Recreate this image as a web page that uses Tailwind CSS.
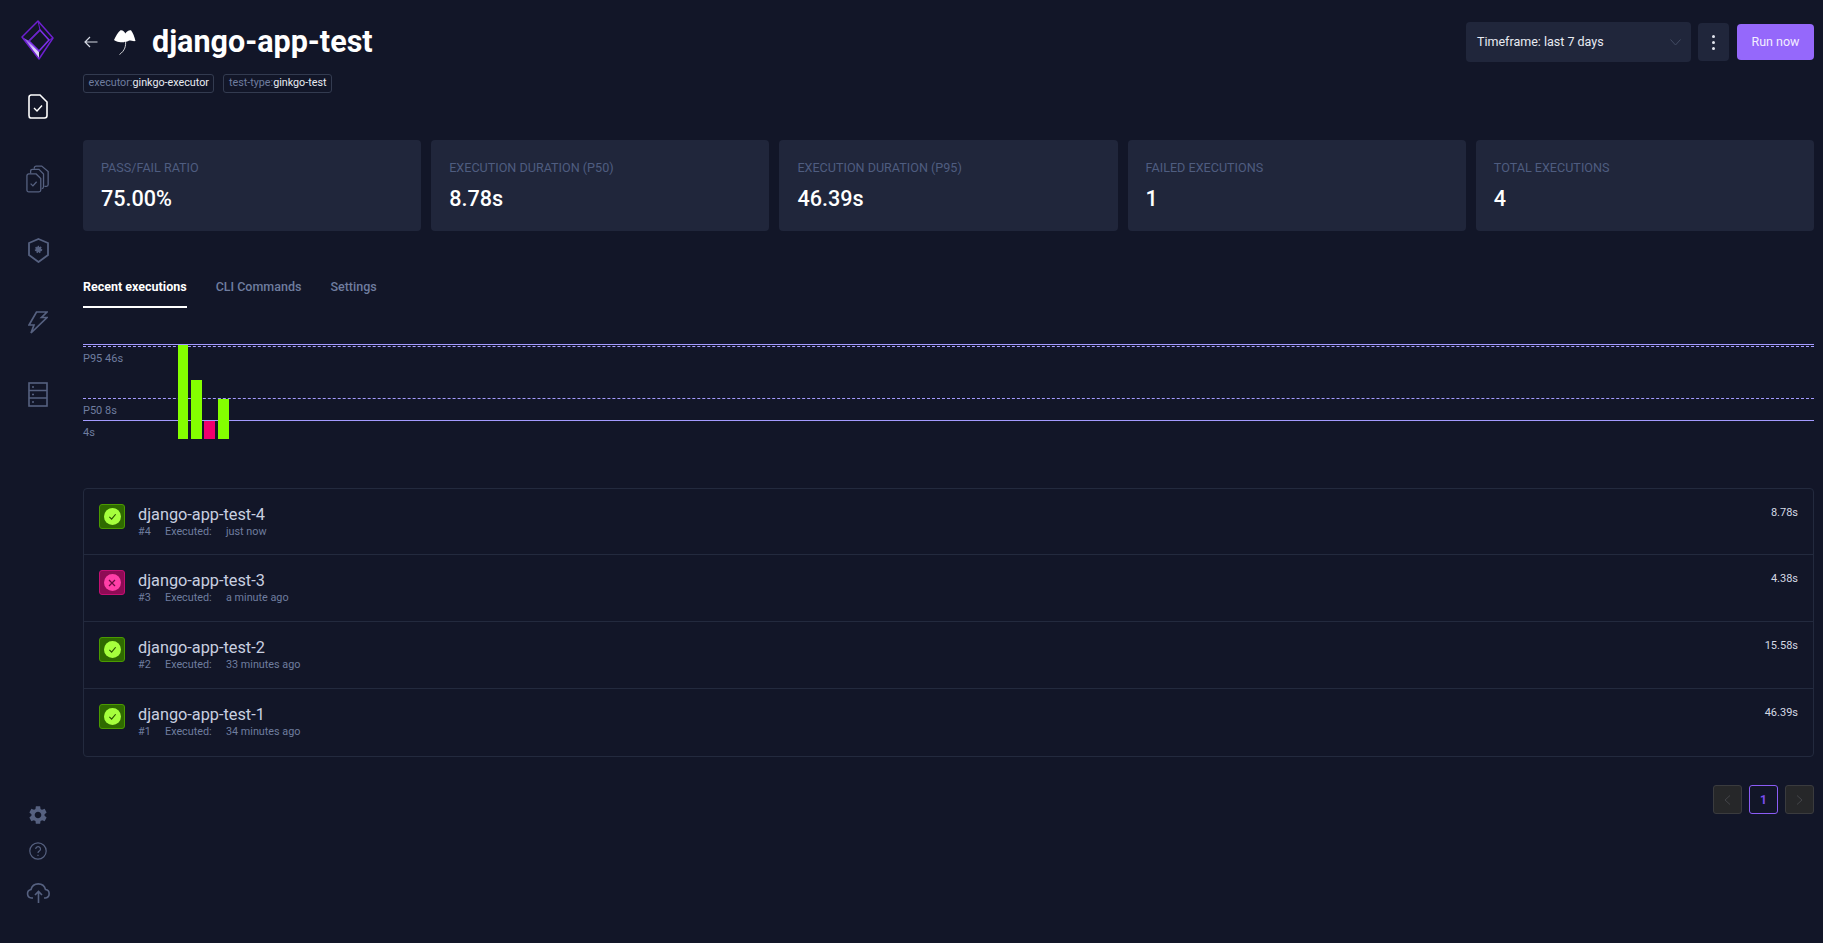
<!DOCTYPE html>
<html lang="en">
<head>
  <meta charset="UTF-8" />
  <title>django-app-test</title>
  <script src="https://cdn.jsdelivr.net/npm/@tailwindcss/browser@4"></script>
</head>
<body class="bg-[#121628] font-['Roboto',sans-serif] text-white">
<div class="flex h-[943px] overflow-hidden">

  <!-- Sidebar -->
  <aside class="w-[76px] shrink-0 flex flex-col items-center text-[#566180]">
    <svg class="mt-[20px] w-[34px] h-[40px]" viewBox="0 0 34 40" fill="none">
      <defs>
        <linearGradient id="lg" x1="0" y1="0" x2="0.6" y2="1"><stop offset="0.1" stop-color="#7a3fe0"/><stop offset="0.7" stop-color="#d9cff5"/></linearGradient>
      </defs>
      <path d="M1 17 L8 21 L18 31 L18 39 Z" fill="url(#lg)"/>
      <path d="M1 17 L17 1 L32 18 L18 39 Z" stroke="#6d1fd0" stroke-width="1.5" stroke-linejoin="round"/>
      <path d="M19 10 L28 20 L18 31 L8 21 Z" stroke="#7c2fe8" stroke-width="1.6"/>
      <path d="M17 1 L19 10 M32 18 L28 20 M8 21 L19 10" stroke="#6d1fd0" stroke-width="1"/>
    </svg>
    <svg class="mt-[34px] w-[20px] h-[25px]" viewBox="0 0 20 25" fill="none" stroke="#fff" stroke-width="1.6"><path d="M3 1h9l7 7v13.500a2.500 2.500 0 0 1-2.500 2.500h-14A2.500 2.500 0 0 1 1 21.500v-18A2.500 2.500 0 0 1 3 1z"/><path d="M6 14l3 3 5-5.500" stroke-width="1.4"/></svg>
    <svg class="mt-[45px] w-[24px] h-[30px]" viewBox="0 0 26 30" fill="none" stroke="currentColor" stroke-width="1.4"><path d="M1 11.500a2 2 0 0 1 2-2h8l5 5v12.500a2 2 0 0 1-2 2H3a2 2 0 0 1-2-2z"/><path d="M5 9V6.500a2 2 0 0 1 2-2h7l5 5v14a2 2 0 0 1-2 2"/><path d="M9 4V3a2 2 0 0 1 2-2h6l7 6v14a2 2 0 0 1-2 2h-2"/><path d="M5 20l2.500 2.500 4-4.500"/></svg>
    <svg class="mt-[44px] w-[21px] h-[25px]" viewBox="0 0 21 25" fill="none" stroke="currentColor" stroke-width="1.8"><path d="M10.500 1L20 5v12l-9.500 7L1 17V5z"/><circle cx="10.500" cy="11.500" r="2.800" fill="currentColor" stroke-width="1.800" stroke-dasharray="1.400 1"/></svg>
    <svg class="mt-[48px] w-[20px] h-[24px]" viewBox="0 0 20 24" fill="none" stroke="currentColor" stroke-width="1.7"><path d="M8.500 1h10.500l-5.500 5.500h5.500L3 22l3-8H1z"/></svg>
    <svg class="mt-[47px] w-[20px] h-[25px]" viewBox="0 0 20 25" fill="none" stroke="currentColor" stroke-width="1.6"><rect x="1" y="1" width="18" height="23"/><path d="M1 8.500h18M1 16h18"/><path d="M4 5h2M4 12.500h2M4 20h2"/></svg>
    <div class="mt-auto flex flex-col items-center mb-[40px]">
      <svg class="w-[22px] h-[22px]" viewBox="0 0 24 24" fill="currentColor"><path d="M19.14 12.94c.04-.3.06-.61.06-.94 0-.32-.02-.64-.07-.94l2.03-1.58c.18-.14.23-.41.12-.61l-1.92-3.32c-.12-.22-.37-.29-.59-.22l-2.39.96c-.5-.38-1.03-.7-1.62-.94l-.36-2.54c-.04-.24-.24-.41-.48-.41h-3.84c-.24 0-.43.17-.47.41l-.36 2.54c-.59.24-1.13.57-1.62.94l-2.39-.96c-.22-.08-.47 0-.59.22L2.74 8.87c-.12.21-.08.47.12.61l2.03 1.58c-.05.3-.09.63-.09.94s.02.64.07.94l-2.03 1.58c-.18.14-.23.41-.12.61l1.92 3.32c.12.22.37.29.59.22l2.39-.96c.5.38 1.03.7 1.62.94l.36 2.54c.05.24.24.41.48.41h3.84c.24 0 .44-.17.47-.41l.36-2.54c.59-.24 1.13-.56 1.62-.94l2.39.96c.22.08.47 0 .59-.22l1.92-3.32c.12-.22.07-.47-.12-.61l-2.01-1.58zM12 15.6c-1.98 0-3.6-1.62-3.6-3.6s1.62-3.6 3.6-3.6 3.6 1.62 3.6 3.6-1.62 3.6-3.6 3.6z"/></svg>
      <svg class="mt-[16px] w-[18px] h-[18px]" viewBox="0 0 18 18" fill="none" stroke="currentColor" stroke-width="1.2"><circle cx="9" cy="9" r="8.200"/><path d="M6.700 7a2.400 2.400 0 1 1 3.600 2.100c-.8.500-1.300.9-1.300 1.900"/><path d="M9 12.800v1.200"/></svg>
      <svg class="mt-[22px] w-[25px] h-[21px]" viewBox="0 0 25 21" fill="none" stroke="currentColor" stroke-width="1.6"><path d="M7 16H5.500A4.300 4.300 0 0 1 5 7.500a7.500 7.500 0 0 1 14.500 0 4.300 4.300 0 0 1 0 8.500H18"/><path d="M12.500 21V10M9 13l3.500-3.500L16 13"/></svg>
    </div>
  </aside>

  <main class="flex-1 min-w-0 pl-[7px] pr-[9px]">
    <!-- Header -->
    <header class="flex items-center justify-between pt-[22px] h-[62px]">
      <div class="flex items-center">
        <svg class="w-[14px] h-[12px] ml-[1px]" viewBox="0 0 14 12" fill="none" stroke="#d5d9e4" stroke-width="1.2"><path d="M13.500 6H1M6 1L1 6l5 5"/></svg>
        <svg class="ml-[15px] w-[23px] h-[26px]" viewBox="0 0 23 26" fill="#fff"><path d="M1 11C3 7 5 3 7.500 1.300 9.500.8 11.500 2.500 12.300 4.600 13.500 2.500 16 .8 18 1.300 20 4 21.500 8 22.500 12 20.500 12.500 18.500 11.500 16 11.500 15 12.500 13.500 13 12.300 12.500 11 13.500 8.500 13.500 6 13 4 12.800 2.500 12 1 11z"/><path d="M12.500 12c.5 5-.5 9.500-6 13.500" fill="none" stroke="#fff" stroke-width="0.8"/></svg>
        <h1 class="ml-[16px] text-[30.5px] leading-[36px] font-bold">django-app-test</h1>
      </div>
      <div class="flex items-center">
        <div class="w-[225px] h-[40px] rounded bg-[#20263b] flex items-center justify-between pl-[11px] pr-[10px] text-[12.5px]">
          <span class="text-[#e8ebf2]">Timeframe: last 7 days</span>
          <svg class="w-[11px] h-[7px]" viewBox="0 0 11 7" fill="none" stroke="#434c63" stroke-width="1"><path d="M.5.5l5 5.500 5-5.500"/></svg>
        </div>
        <div class="ml-[7px] w-[31px] h-[38px] rounded bg-[#20263b] flex flex-col items-center justify-center gap-[3px]">
          <span class="w-[3px] h-[3px] rounded-full bg-[#e2e5ee]"></span><span class="w-[3px] h-[3px] rounded-full bg-[#e2e5ee]"></span><span class="w-[3px] h-[3px] rounded-full bg-[#e2e5ee]"></span>
        </div>
        <button class="ml-[8px] w-[77px] h-[36px] rounded bg-[#9568fb] text-[12.5px] text-[#f3eeff]">Run now</button>
      </div>
    </header>

    <!-- Labels -->
    <div class="flex gap-[9px] mt-[12px]">
      <span class="h-[19px] px-[4.5px] flex items-center rounded-[3px] border border-[#333b50] text-[10.75px] text-[#6f7d9f]">executor:<span class="text-[#e8ebf2]">ginkgo-executor</span></span>
      <span class="h-[19px] px-[4.5px] flex items-center rounded-[3px] border border-[#333b50] text-[10.75px] text-[#6f7d9f]">test-type:<span class="text-[#e8ebf2]">ginkgo-test</span></span>
    </div>

    <!-- Summary cards -->
    <section class="grid grid-cols-5 gap-[10px] mt-[47px]">
      <div class="h-[91px] rounded bg-[#20263b] px-[18px] pt-[21px]"><p class="text-[12.6px] leading-[14px] text-[#4f5d80]">PASS/FAIL RATIO</p><p class="mt-[12px] text-[21.6px] leading-[24px] font-medium">75.00%</p></div>
      <div class="h-[91px] rounded bg-[#20263b] px-[18px] pt-[21px]"><p class="text-[12.6px] leading-[14px] text-[#4f5d80]">EXECUTION DURATION (P50)</p><p class="mt-[12px] text-[21.6px] leading-[24px] font-medium">8.78s</p></div>
      <div class="h-[91px] rounded bg-[#20263b] px-[18px] pt-[21px]"><p class="text-[12.6px] leading-[14px] text-[#4f5d80]">EXECUTION DURATION (P95)</p><p class="mt-[12px] text-[21.6px] leading-[24px] font-medium">46.39s</p></div>
      <div class="h-[91px] rounded bg-[#20263b] px-[18px] pt-[21px]"><p class="text-[12.6px] leading-[14px] text-[#4f5d80]">FAILED EXECUTIONS</p><p class="mt-[12px] text-[21.6px] leading-[24px] font-medium">1</p></div>
      <div class="h-[91px] rounded bg-[#20263b] px-[18px] pt-[21px]"><p class="text-[12.6px] leading-[14px] text-[#4f5d80]">TOTAL EXECUTIONS</p><p class="mt-[12px] text-[21.6px] leading-[24px] font-medium">4</p></div>
    </section>

    <!-- Tabs -->
    <nav class="flex gap-[29px] mt-[45px] text-[12.5px] font-medium text-[#6f7d9f]">
      <a class="h-[32px] pt-[2px] border-b-2 border-white text-white font-bold" href="#">Recent executions</a>
      <a class="pt-[2px]" href="#">CLI Commands</a>
      <a class="pt-[2px]" href="#">Settings</a>
    </nav>

    <!-- Chart -->
    <div class="relative h-[100px] mt-[36px] text-[11px] leading-[13px] text-[#6f7d9f]">
      <div class="absolute inset-x-0 top-0 border-t border-[#a49bff]"></div>
      <div class="absolute inset-x-0 top-[2px] border-t border-dashed border-[#a49bff]"></div>
      <span class="absolute left-0 top-[8px]">P95 46s</span>
      <div class="absolute inset-x-0 top-[54px] border-t border-dashed border-[#a49bff]"></div>
      <span class="absolute left-0 top-[60px]">P50 8s</span>
      <div class="absolute inset-x-0 top-[76px] border-t border-[#a49bff]"></div>
      <span class="absolute left-0 top-[82px]">4s</span>
      <div class="absolute left-[95px] top-[1px] w-[10px] h-[94px] bg-[#84ff00]"></div>
      <div class="absolute left-[108px] top-[36px] w-[11px] h-[59px] bg-[#84ff00]"></div>
      <div class="absolute left-[121px] top-[77px] w-[11px] h-[18px] bg-[#f0006e]"></div>
      <div class="absolute left-[135px] top-[55px] w-[11px] h-[40px] bg-[#84ff00]"></div>
    </div>

    <!-- Executions list -->
    <section class="mt-[44px] rounded border border-[#232a3e] divide-y divide-[#232a3e]">
      <div class="flex justify-between h-[66px] px-[15px] pt-[15px]">
        <div class="flex">
          <span class="w-[26px] h-[25px] rounded-[3px] bg-[#2f6a00] border border-[#4a9a00] flex items-center justify-center"><span class="w-[17px] h-[17px] rounded-full bg-[#a6ff3d] flex items-center justify-center"><svg class="w-[9px] h-[9px]" viewBox="0 0 10 10" fill="none" stroke="#2a5200" stroke-width="1.3"><path d="M1.500 5.500l2.500 2.500 4.500-5.500"/></svg></span></span>
          <div class="ml-[13px] mt-[1px]"><p class="text-[16.3px] leading-[19px] text-[#c9d0e0]">django-app-test-4</p><p class="mt-[1px] flex text-[10.8px] leading-[13px] text-[#6f7d9f]"><span class="w-[27px]">#4</span><span class="w-[47px]">Executed:</span><span class="ml-[14px]">just now</span></p></div>
        </div>
        <span class="text-[11px] text-[#d5d9e4] leading-[13px] pt-[2px]">8.78s</span>
      </div>
      <div class="flex justify-between h-[67px] px-[15px] pt-[15px]">
        <div class="flex">
          <span class="w-[26px] h-[25px] rounded-[3px] bg-[#8f0b55] border border-[#c40f73] flex items-center justify-center"><span class="w-[17px] h-[17px] rounded-full bg-[#ff3fa8] flex items-center justify-center"><svg class="w-[8px] h-[8px]" viewBox="0 0 8 8" fill="none" stroke="#6a0a40" stroke-width="1.3"><path d="M1 1l6 6M7 1L1 7"/></svg></span></span>
          <div class="ml-[13px] mt-[1px]"><p class="text-[16.3px] leading-[19px] text-[#c9d0e0]">django-app-test-3</p><p class="mt-[1px] flex text-[10.8px] leading-[13px] text-[#6f7d9f]"><span class="w-[27px]">#3</span><span class="w-[47px]">Executed:</span><span class="ml-[14px]">a minute ago</span></p></div>
        </div>
        <span class="text-[11px] text-[#d5d9e4] leading-[13px] pt-[2px]">4.38s</span>
      </div>
      <div class="flex justify-between h-[67px] px-[15px] pt-[15px]">
        <div class="flex">
          <span class="w-[26px] h-[25px] rounded-[3px] bg-[#2f6a00] border border-[#4a9a00] flex items-center justify-center"><span class="w-[17px] h-[17px] rounded-full bg-[#a6ff3d] flex items-center justify-center"><svg class="w-[9px] h-[9px]" viewBox="0 0 10 10" fill="none" stroke="#2a5200" stroke-width="1.3"><path d="M1.500 5.500l2.500 2.500 4.500-5.500"/></svg></span></span>
          <div class="ml-[13px] mt-[1px]"><p class="text-[16.3px] leading-[19px] text-[#c9d0e0]">django-app-test-2</p><p class="mt-[1px] flex text-[10.8px] leading-[13px] text-[#6f7d9f]"><span class="w-[27px]">#2</span><span class="w-[47px]">Executed:</span><span class="ml-[14px]">33 minutes ago</span></p></div>
        </div>
        <span class="text-[11px] text-[#d5d9e4] leading-[13px] pt-[2px]">15.58s</span>
      </div>
      <div class="flex justify-between h-[67px] px-[15px] pt-[15px]">
        <div class="flex">
          <span class="w-[26px] h-[25px] rounded-[3px] bg-[#2f6a00] border border-[#4a9a00] flex items-center justify-center"><span class="w-[17px] h-[17px] rounded-full bg-[#a6ff3d] flex items-center justify-center"><svg class="w-[9px] h-[9px]" viewBox="0 0 10 10" fill="none" stroke="#2a5200" stroke-width="1.3"><path d="M1.500 5.500l2.500 2.500 4.500-5.500"/></svg></span></span>
          <div class="ml-[13px] mt-[1px]"><p class="text-[16.3px] leading-[19px] text-[#c9d0e0]">django-app-test-1</p><p class="mt-[1px] flex text-[10.8px] leading-[13px] text-[#6f7d9f]"><span class="w-[27px]">#1</span><span class="w-[47px]">Executed:</span><span class="ml-[14px]">34 minutes ago</span></p></div>
        </div>
        <span class="text-[11px] text-[#d5d9e4] leading-[13px] pt-[2px]">46.39s</span>
      </div>
    </section>

    <!-- Pagination -->
    <div class="flex justify-end gap-[7px] mt-[28px]">
      <span class="w-[29px] h-[29px] rounded-[3px] bg-[#262729] border border-[#3a3b3e] flex items-center justify-center"><svg class="w-[7px] h-[10px]" viewBox="0 0 7 10" fill="none" stroke="#444549" stroke-width="1"><path d="M6 .5L1 5l5 4.500"/></svg></span>
      <span class="w-[29px] h-[29px] rounded-[3px] border border-[#8b5cf6] flex items-center justify-center text-[12px] font-bold text-[#7c4df0]">1</span>
      <span class="w-[29px] h-[29px] rounded-[3px] bg-[#262729] border border-[#3a3b3e] flex items-center justify-center"><svg class="w-[7px] h-[10px]" viewBox="0 0 7 10" fill="none" stroke="#444549" stroke-width="1"><path d="M1 .5L6 5 1 9.500"/></svg></span>
    </div>
  </main>
</div>
</body>
</html>
